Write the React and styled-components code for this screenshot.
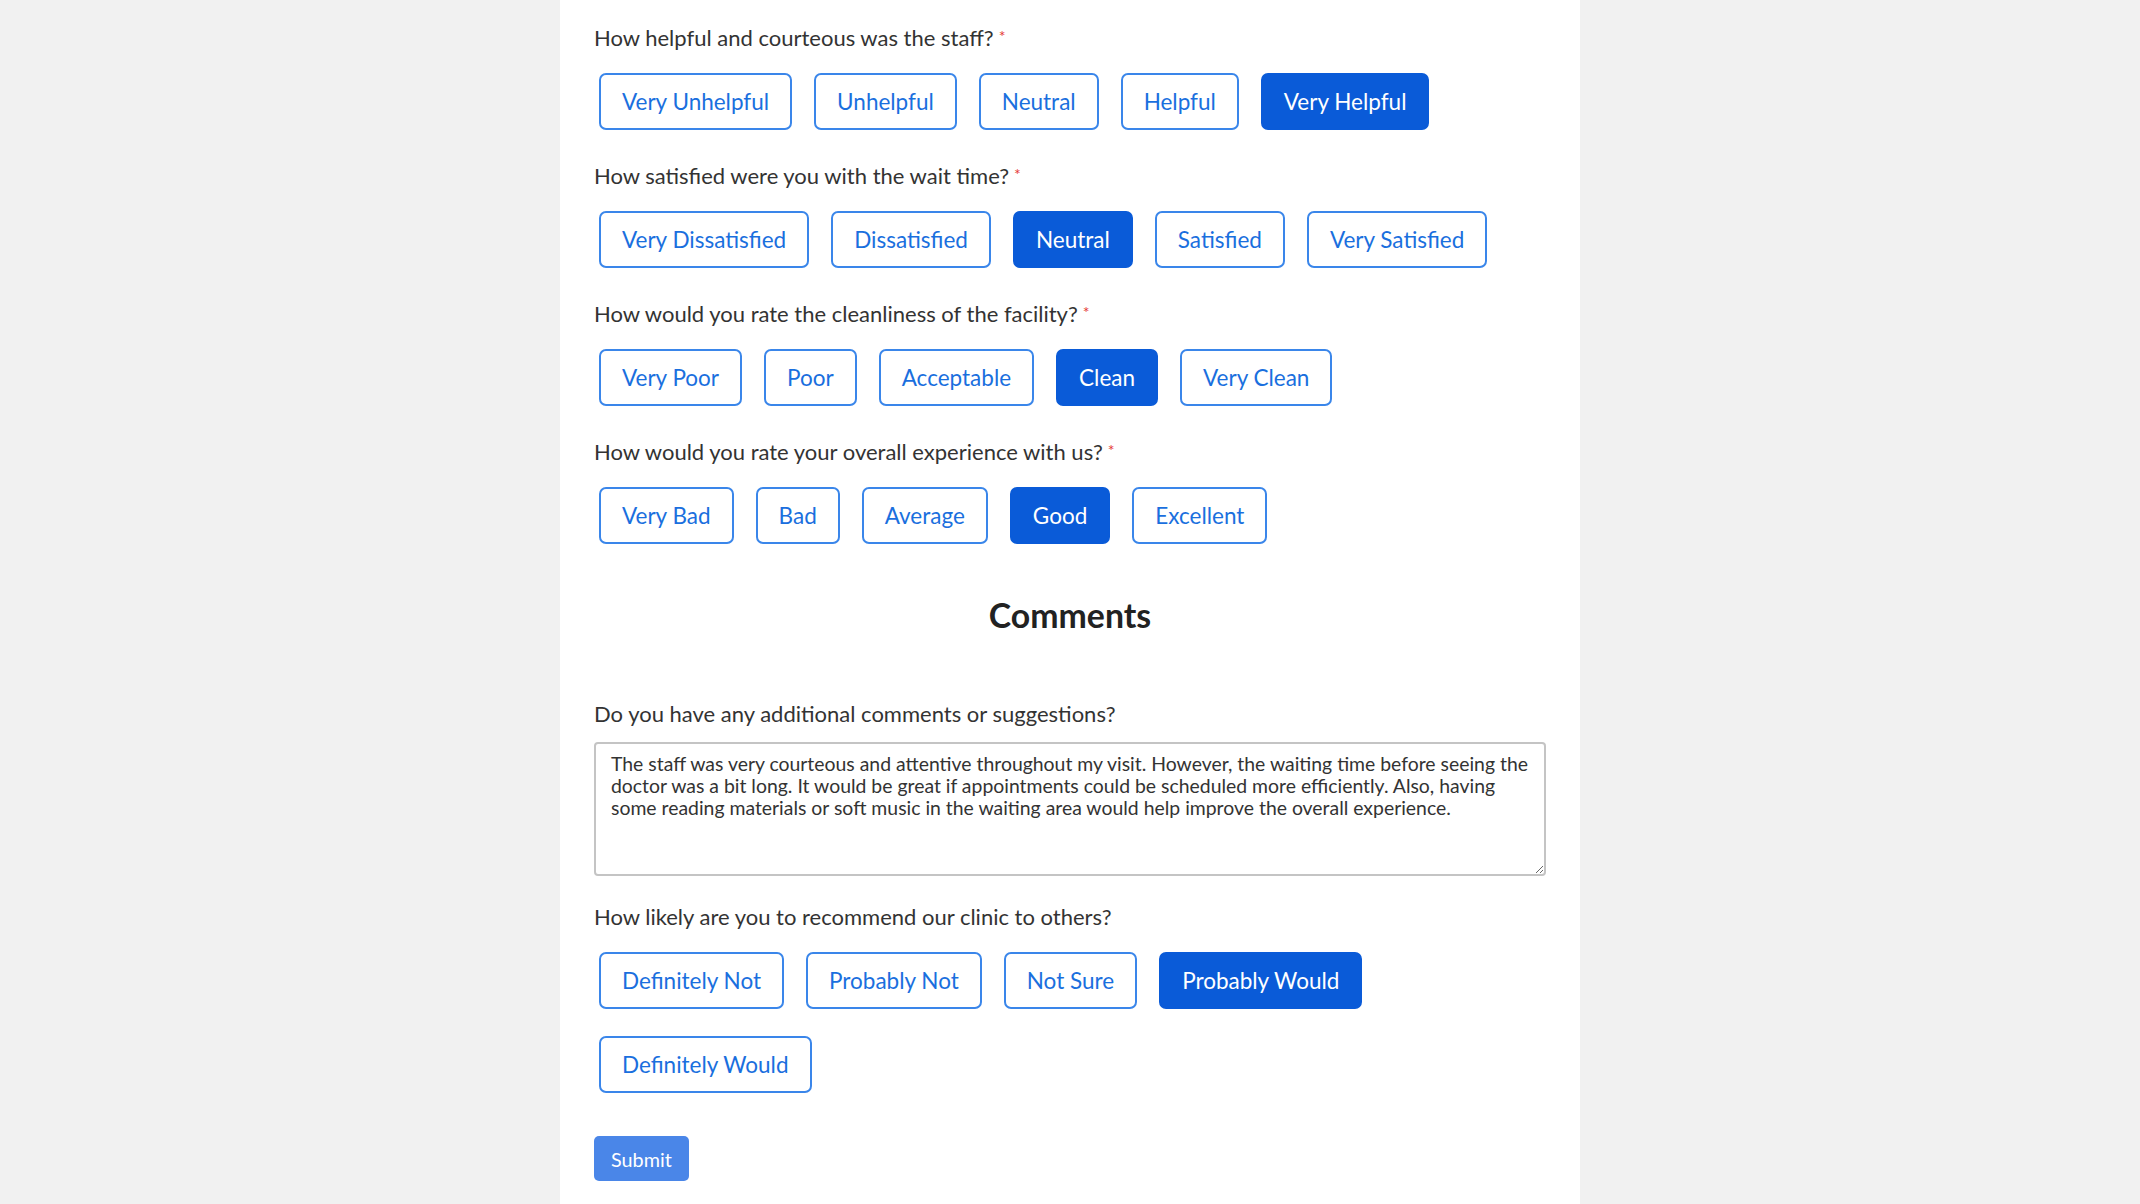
import React, { useState } from "react";
import styled, { createGlobalStyle } from "styled-components";

const Global = createGlobalStyle`
  html, body { margin: 0; padding: 0; }
  body {
    background: #f1f1f1;
    font-family: Lato, "Open Sans", "Liberation Sans", sans-serif;
    color: #333;
  }
`;

const Panel = styled.main`
  width: 1020px;
  min-height: 1204px;
  box-sizing: border-box;
  margin: 0 auto;
  background: #fff;
  padding: 25px 34px 30px;
`;

const Group = styled.section`
  margin-bottom: ${(p) => p.$mb ?? 34}px;
`;

const Label = styled.div`
  font-size: 22px;
  line-height: 26px;
  color: #333;
  margin-bottom: ${(p) => p.$mb ?? 15}px;
`;

const Star = styled.span`
  color: #e53935;
  font-size: 16px;
  vertical-align: top;
  margin-left: 5px;
  position: relative;
  top: -2px;
`;

const Row = styled.div`
  display: flex;
  flex-wrap: wrap;
  column-gap: 22px;
  row-gap: 27px;
  padding: 7px 0 0 5px;
`;

const Choice = styled.button`
  height: 57px;
  box-sizing: border-box;
  padding: 0 21px;
  border-radius: 7px;
  border: 2px solid ${(p) => (p.$on ? "#0a5bd8" : "#3a86ea")};
  background: ${(p) => (p.$on ? "#0a5bd8" : "#fff")};
  color: ${(p) => (p.$on ? "#fff" : "#1a6fde")};
  font-family: Lato, "Open Sans", "Liberation Sans", sans-serif;
  font-size: 22.5px;
  cursor: pointer;
`;

const Heading = styled.h2`
  margin: 52px 0 67px;
  text-align: center;
  font-size: 33.8px;
  line-height: 38px;
  font-weight: 700;
  color: #222;
`;

const Area = styled.textarea`
  display: block;
  width: 100%;
  height: 134px;
  box-sizing: border-box;
  padding: 9px 15px;
  border: 2px solid #c4c4c4;
  border-radius: 4px;
  font-family: Lato, "Open Sans", "Liberation Sans", sans-serif;
  font-size: 19.4px;
  line-height: 22px;
  color: #333;
  resize: vertical;
`;

const Submit = styled.button`
  margin-top: 43px;
  height: 45px;
  padding: 0 17px;
  border: none;
  border-radius: 5px;
  background: #4a86e8;
  color: #fff;
  font-family: Lato, "Open Sans", "Liberation Sans", sans-serif;
  font-size: 19.8px;
  cursor: pointer;
`;

const questions = [
  {
    q: "How helpful and courteous was the staff?",
    opts: ["Very Unhelpful", "Unhelpful", "Neutral", "Helpful", "Very Helpful"],
    sel: 4,
  },
  {
    q: "How satisfied were you with the wait time?",
    opts: ["Very Dissatisfied", "Dissatisfied", "Neutral", "Satisfied", "Very Satisfied"],
    sel: 2,
  },
  {
    q: "How would you rate the cleanliness of the facility?",
    opts: ["Very Poor", "Poor", "Acceptable", "Clean", "Very Clean"],
    sel: 3,
  },
  {
    q: "How would you rate your overall experience with us?",
    opts: ["Very Bad", "Bad", "Average", "Good", "Excellent"],
    sel: 3,
  },
];

const recommend = ["Definitely Not", "Probably Not", "Not Sure", "Probably Would", "Definitely Would"];

const comment =
  "The staff was very courteous and attentive throughout my visit. However, the waiting time before seeing the doctor was a bit long. It would be great if appointments could be scheduled more efficiently. Also, having some reading materials or soft music in the waiting area would help improve the overall experience.";

function Choices({ opts, value, onPick }) {
  return (
    <Row>
      {opts.map((o, i) => (
        <Choice key={o} type="button" $on={i === value} onClick={() => onPick(i)}>
          {o}
        </Choice>
      ))}
    </Row>
  );
}

export default function App() {
  const [sels, setSels] = useState(questions.map((q) => q.sel));
  const [rec, setRec] = useState(3);
  const [text, setText] = useState(comment);
  return (
    <>
      <Global />
      <Panel>
        {questions.map((q, qi) => (
          <Group key={q.q} $mb={qi === questions.length - 1 ? 0 : 33}>
            <Label>
              {q.q}
              <Star>*</Star>
            </Label>
            <Choices
              opts={q.opts}
              value={sels[qi]}
              onPick={(i) => setSels((s) => s.map((v, j) => (j === qi ? i : v)))}
            />
          </Group>
        ))}
        <Heading>Comments</Heading>
        <Group $mb={28}>
          <Label>Do you have any additional comments or suggestions?</Label>
          <Area value={text} onChange={(e) => setText(e.target.value)} />
        </Group>
        <Group $mb={0}>
          <Label>How likely are you to recommend our clinic to others?</Label>
          <Choices opts={recommend} value={rec} onPick={setRec} />
        </Group>
        <Submit type="button">Submit</Submit>
      </Panel>
    </>
  );
}
